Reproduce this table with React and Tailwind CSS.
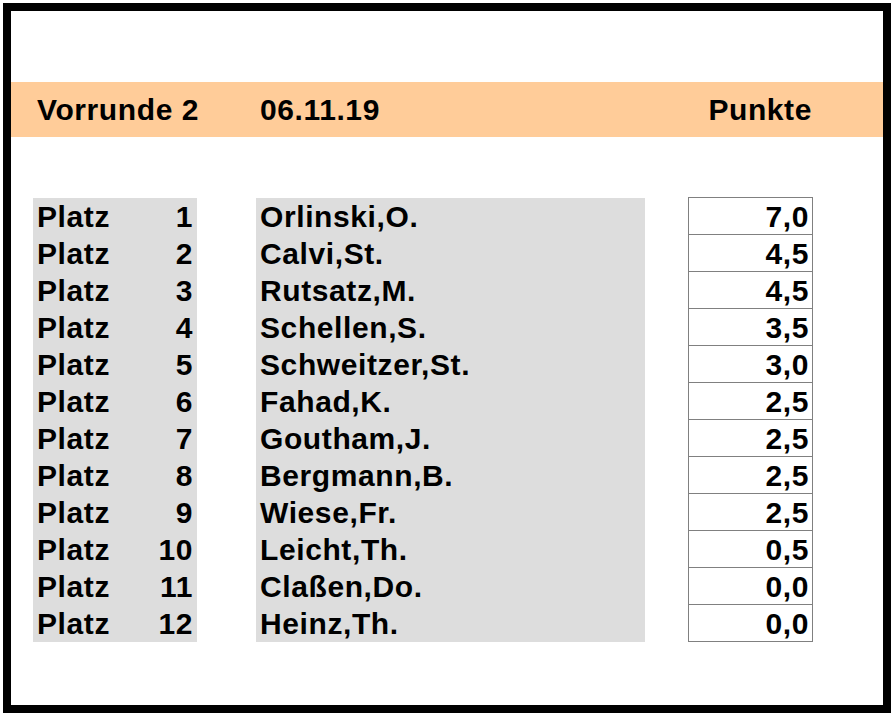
import React from 'react';

const rows = [
  { place: 1, name: 'Orlinski,O.', points: '7,0' },
  { place: 2, name: 'Calvi,St.', points: '4,5' },
  { place: 3, name: 'Rutsatz,M.', points: '4,5' },
  { place: 4, name: 'Schellen,S.', points: '3,5' },
  { place: 5, name: 'Schweitzer,St.', points: '3,0' },
  { place: 6, name: 'Fahad,K.', points: '2,5' },
  { place: 7, name: 'Goutham,J.', points: '2,5' },
  { place: 8, name: 'Bergmann,B.', points: '2,5' },
  { place: 9, name: 'Wiese,Fr.', points: '2,5' },
  { place: 10, name: 'Leicht,Th.', points: '0,5' },
  { place: 11, name: 'Claßen,Do.', points: '0,0' },
  { place: 12, name: 'Heinz,Th.', points: '0,0' },
];

const App = () => {
  return (
    <div className="w-[894px] h-[720px] bg-white p-[3px] font-['Liberation_Sans',Arial,sans-serif] font-bold text-black tracking-[0.6px]">
      <div className="w-[888px] h-[710px] border-[8px] border-black bg-white">
        {/* Header band */}
        <div className="mt-[71px] h-[55px] bg-[#ffcc99] flex items-center text-[30px] leading-[55px]">
          <div className="w-[249px] pl-[26px]">Vorrunde 2</div>
          <div className="flex-1">06.11.19</div>
          <div className="pr-[71px]">Punkte</div>
        </div>

        {/* Ranking table */}
        <div className="mt-[60px] flex text-[30px] leading-[37px]">
          <div className="ml-[22px] w-[164px] bg-[#dddddd] mt-px">
            {rows.map(r => (
              <div key={r.place} className="h-[37px] flex justify-between pl-[4px] pr-[4px]">
                <span>Platz</span>
                <span>{r.place}</span>
              </div>
            ))}
          </div>
          <div className="ml-[59px] w-[389px] bg-[#dddddd] mt-px">
            {rows.map(r => (
              <div key={r.place} className="h-[37px] pl-[4px]">{r.name}</div>
            ))}
          </div>
          <div className="ml-[43px] w-[125px] border-b border-[#808080]">
            {rows.map(r => (
              <div key={r.place} className="h-[37px] border-t border-x border-[#808080] text-right pr-[3px] leading-[37px]">
                {r.points}
              </div>
            ))}
          </div>
        </div>
      </div>
    </div>
  );
};

export default App;
